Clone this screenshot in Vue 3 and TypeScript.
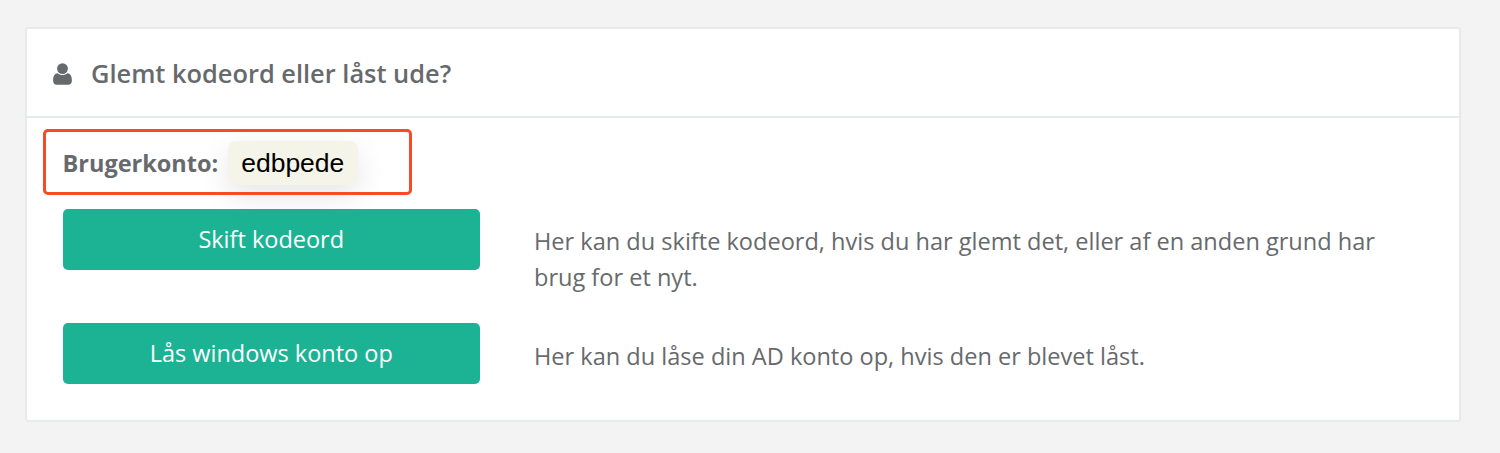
<script setup lang="ts">
interface Action { label: string; text: string }
const actions: Action[] = [
  { label: 'Skift kodeord', text: 'Her kan du skifte kodeord, hvis du har glemt det, eller af en anden grund har brug for et nyt.' },
  { label: 'Lås windows konto op', text: 'Her kan du låse din AD konto op, hvis den er blevet låst.' },
]
</script>

<template>
  <main class="page">
    <section class="card">
      <header class="head">
        <svg class="icon" viewBox="0 0 19 22" aria-hidden="true">
          <circle cx="9.5" cy="5.6" r="5.4" fill="#676a6c" />
          <path d="M4.6 10.2C6 11.4 7.6 12 9.5 12s3.500-.6 4.900-1.800c2.900.3 4.500 2.700 4.500 7.300 0 2.800-1.400 4.300-3.800 4.300H3.900C1.500 21.800.1 20.300.1 17.500c0-4.600 1.600-7 4.500-7.300z" fill="#676a6c" />
        </svg>
        <h2 class="title">Glemt kodeord eller låst ude?</h2>
      </header>
      <div class="body">
        <div class="account">
          <span class="account-label">Brugerkonto:</span>
          <span class="chip">edbpede</span>
          <span class="highlight"></span>
        </div>
        <div v-for="a in actions" :key="a.label" class="row">
          <button class="btn" type="button">{{ a.label }}</button>
          <p class="desc">{{ a.text }}</p>
        </div>
      </div>
    </section>
  </main>
</template>

<style>
html, body { margin: 0; background: #f3f3f4; }
</style>

<style scoped>
.page {
  box-sizing: border-box;
  height: 453px;
  padding: 27px 39px 0 25px;
  background: #f3f3f4;
  font-family: "Open Sans", sans-serif;
  color: #676a6c;
}
.card {
  box-sizing: border-box;
  height: 395px;
  background: #fff;
  border: 2px solid #e7eaec;
  border-radius: 3px;
}
.head {
  box-sizing: border-box;
  height: 89px;
  display: flex;
  align-items: center;
  padding-left: 26px;
  border-bottom: 2px solid #e7eaec;
}
.icon { width: 19px; height: 22px; margin: 3px 19px 0 0; flex: none; }
.title {
  margin: 0;
  font-size: 25.4px;
  font-weight: 600;
  line-height: 30px;
}
.body { padding: 23px 0 0 35.5px; }
.account {
  position: relative;
  display: flex;
  align-items: center;
  height: 44px;
}
.account-label { font-size: 23.5px; font-weight: 700; }
.chip {
  box-sizing: border-box;
  height: 44px;
  width: 130px;
  margin-left: 9.5px;
  display: flex;
  align-items: center;
  justify-content: center;
  background: #f5f4e8;
  border-radius: 8px;
  box-shadow: 0 10px 30px rgba(0, 0, 0, 0.1);
  color: #000;
  font-family: "Liberation Sans", Arial, sans-serif;
  font-size: 26.5px;
}
.highlight {
  position: absolute;
  left: -20px;
  top: -12px;
  width: 369.5px;
  height: 66px;
  box-sizing: border-box;
  border: 3px solid #f84a25;
  border-radius: 5px;
  pointer-events: none;
}
.row {
  display: flex;
  align-items: flex-start;
  margin-top: 24px;
  height: 90px;
}
.btn {
  flex: none;
  width: 417.5px;
  height: 61px;
  background: #1cb394;
  border: 0;
  border-radius: 5px;
  color: #fff;
  font-family: "Open Sans", sans-serif;
  font-size: 23.5px;
  padding: 0 0 2px;
}
.desc {
  margin: 14px 0 0 54px;
  width: 860px;
  font-size: 23.55px;
  line-height: 36px;
}
.row + .row .desc { margin-top: 15px; }
</style>
